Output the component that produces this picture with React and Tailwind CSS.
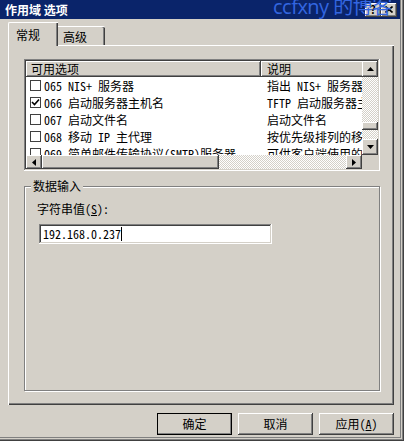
import React from 'react';

const raised =
  'shadow-[inset_-1px_-1px_#404040,inset_1px_1px_#ffffff,inset_-2px_-2px_#808080,inset_2px_2px_#d4d0c8]';
const sunken =
  'shadow-[inset_-1px_-1px_#ffffff,inset_1px_1px_#808080,inset_-2px_-2px_#d4d0c8,inset_2px_2px_#404040]';
const checker =
  'bg-[repeating-conic-gradient(#ffffff_0_25%,#d4d0c8_0_50%)] bg-[length:2px_2px]';

const rows = [
  { on: false, code: '065', name: 'NIS+ 服务器', desc: '指出 NIS+ 服务器' },
  { on: true, code: '066', name: '启动服务器主机名', desc: 'TFTP 启动服务器主机名' },
  { on: false, code: '067', name: '启动文件名', desc: '启动文件名' },
  { on: false, code: '068', name: '移动 IP 主代理', desc: '按优先级排列的移动 IP 主代理' },
  { on: false, code: '069', name: '简单邮件传输协议(SMTP)服务器', desc: '可供客户端使用的 SMTP 服务器' },
];

// small black triangle for scroll buttons
const Arrow = ({ dir }) => {
  const pts = {
    up: '0,4 3.5,0 7,4',
    down: '0,0 3.5,4 7,0',
    left: '4,0 0,3.5 4,7',
    right: '0,0 4,3.5 0,7',
  }[dir];
  const vert = dir === 'up' || dir === 'down';
  return (
    <svg width={vert ? 7 : 4} height={vert ? 4 : 7} viewBox={vert ? '0 0 7 4' : '0 0 4 7'}>
      <polygon points={pts} fill="#000" />
    </svg>
  );
};

const ScrollBtn = ({ dir, className = '' }) => (
  <div className={`bg-[#d4d0c8] ${raised} flex items-center justify-center shrink-0 ${className}`}>
    <Arrow dir={dir} />
  </div>
);

const Checkbox = ({ on }) => (
  <div className="w-[11px] h-[11px] border border-[#404040] bg-white shrink-0 flex items-center justify-center">
    {on && (
      <svg width="9" height="9" viewBox="0 0 9 9">
        <polyline points="1,4 3.5,6.5 8,1.5" fill="none" stroke="#000" strokeWidth="1.6" />
      </svg>
    )}
  </div>
);

const Button = ({ children, primary }) => (
  <div
    className={`w-[75px] h-[22px] bg-[#d4d0c8] flex items-center justify-center text-[12px] text-black ${raised} ${
      primary ? 'outline outline-1 outline-black -outline-offset-1' : ''
    }`}
  >
    {children}
  </div>
);

export default function App() {
  return (
    <div className="w-[408px] h-[443px] bg-white [font-family:'Noto_Sans_Mono_CJK_SC','Noto_Sans_CJK_SC',sans-serif] text-[12px] leading-none text-black">
      <div className="w-[404px] h-[441px] bg-[#d4d0c8] flex flex-col shadow-[inset_-1px_-1px_#404040,inset_-2px_-2px_#808080,inset_-3px_-3px_#d4d0c8,inset_-4px_-4px_#808080]">
        {/* Title bar */}
        <div className="relative w-[400px] h-[19px] bg-[#0a246a] flex items-center pl-[5px] overflow-hidden">
          <span className="text-white font-bold text-[12px] [font-family:'Noto_Sans_CJK_SC',sans-serif]">作用域 选项</span>
          <div className="ml-auto mr-[3px] flex">
            <div className={`w-[16px] h-[14px] bg-[#d4d0c8] ${raised} flex items-center justify-center text-[11px] font-bold`}>?</div>
            <div className={`w-[16px] h-[14px] bg-[#d4d0c8] ${raised} flex items-center justify-center`}>
              <svg width="8" height="7" viewBox="0 0 8 7">
                <path d="M0.5 0.5 L7.5 6.5 M7.5 0.5 L0.5 6.5" stroke="#000" strokeWidth="1.6" />
              </svg>
            </div>
          </div>
          <span className="absolute left-[273px] top-[-5px] text-[20px] leading-[24px] text-[#3366e0] [font-family:'Open_Sans','Noto_Sans_CJK_SC',sans-serif] tracking-[-0.5px]">
            ccfxny 的博客
          </span>
        </div>

        {/* Tabs */}
        <div className="h-[26px] flex items-end pl-[8px]">
          <div className="relative z-10 -mb-[1px] w-[50px] h-[24px] bg-[#d4d0c8] border-l border-t border-white rounded-tl-[2px] shadow-[inset_-1px_0_#404040,inset_-2px_0_#808080] pl-[7px] pt-[6px]">
            常规
          </div>
          <div className="w-[47px] h-[19px] bg-[#d4d0c8] border-t border-white rounded-tr-[2px] shadow-[inset_-1px_0_#404040,inset_-2px_0_#808080] pl-[5px] pt-[4px]">
            高级
          </div>
        </div>

        {/* Tab panel */}
        <div className="ml-[8px] w-[386px] h-[360px] bg-[#d4d0c8] shadow-[inset_1px_1px_#ffffff,inset_-1px_-1px_#404040,inset_-2px_-2px_#808080] pt-[14px] pl-[16px]">
          {/* List view */}
          <div className={`w-[356px] h-[112px] bg-white p-[2px] flex flex-col ${sunken}`}>
            <div className="flex h-[94px]">
              <div className="w-[336px] overflow-hidden flex flex-col">
                <div className="flex h-[16px] shrink-0">
                  <div className={`w-[235px] shrink-0 bg-[#d4d0c8] ${raised} pl-[5px] flex items-center`}>可用选项</div>
                  <div className={`w-[120px] shrink-0 bg-[#d4d0c8] ${raised} pl-[6px] flex items-center`}>说明</div>
                </div>
                {rows.map((r) => (
                  <div key={r.code} className="flex h-[17px] items-center shrink-0 whitespace-nowrap">
                    <div className="w-[235px] shrink-0 flex items-center pl-[4px] gap-[3px] overflow-hidden">
                      <Checkbox on={r.on} />
                      <span>
                        {r.code} {r.name}
                      </span>
                    </div>
                    <div className="pl-[6px] shrink-0">{r.desc}</div>
                  </div>
                ))}
              </div>
              <div className={`w-[16px] flex flex-col ${checker}`}>
                <ScrollBtn dir="up" className="h-[16px]" />
                <div className="h-[45px]" />
                <div className={`h-[8px] bg-[#d4d0c8] ${raised}`} />
                <div className="h-[9px]" />
                <ScrollBtn dir="down" className="h-[16px]" />
              </div>
            </div>
            <div className="flex h-[14px]">
              <ScrollBtn dir="left" className="w-[16px]" />
              <div className={`w-[177px] bg-[#d4d0c8] ${raised}`} />
              <div className={`w-[127px] ${checker}`} />
              <ScrollBtn dir="right" className="w-[16px]" />
              <div className="w-[16px] bg-[#d4d0c8]" />
            </div>
          </div>

          {/* Group box */}
          <div className="relative mt-[15px] w-[356px] h-[205px] border border-[#808080] shadow-[1px_1px_#ffffff,inset_1px_1px_#ffffff] pt-[16px] pl-[12px]">
            <span className="absolute left-[6px] top-[-7px] px-[2px] bg-[#d4d0c8]">数据输入</span>
            <div>
              字符串值(<span className="underline">S</span>):
            </div>
            <div className={`mt-[9px] ml-[2px] w-[233px] h-[20px] bg-white ${sunken} flex items-center pl-[4px]`}>
              <span>192.168.0.237</span>
              <span className="w-px h-[14px] bg-black" />
            </div>
          </div>
        </div>

        {/* Buttons */}
        <div className="mt-[8px] w-[394px] flex justify-end gap-[6px]">
          <Button primary>确定</Button>
          <Button>取消</Button>
          <Button>
            应用(<span className="underline">A</span>)
          </Button>
        </div>
      </div>
    </div>
  );
}
